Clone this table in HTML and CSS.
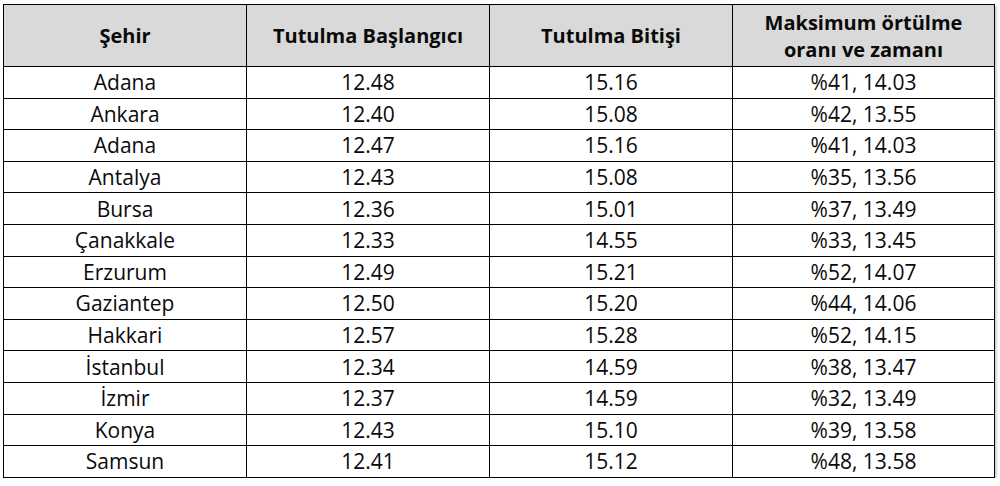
FILE: index.html
```html
<!DOCTYPE html>
<html lang="tr">
<head>
<meta charset="utf-8">
<link rel="stylesheet" href="styles.css">
</head>
<body>
<table class="eclipse">
  <colgroup>
    <col class="c1"><col class="c2"><col class="c3"><col class="c4">
  </colgroup>
  <thead>
    <tr class="head">
      <th>Şehir</th>
      <th>Tutulma Başlangıcı</th>
      <th>Tutulma Bitişi</th>
      <th>Maksimum örtülme<br>oranı ve zamanı</th>
    </tr>
  </thead>
  <tbody>
    <tr><td>Adana</td><td>12.48</td><td>15.16</td><td>%41, 14.03</td></tr>
    <tr><td>Ankara</td><td>12.40</td><td>15.08</td><td>%42, 13.55</td></tr>
    <tr><td>Adana</td><td>12.47</td><td>15.16</td><td>%41, 14.03</td></tr>
    <tr><td>Antalya</td><td>12.43</td><td>15.08</td><td>%35, 13.56</td></tr>
    <tr><td>Bursa</td><td>12.36</td><td>15.01</td><td>%37, 13.49</td></tr>
    <tr><td>Çanakkale</td><td>12.33</td><td>14.55</td><td>%33, 13.45</td></tr>
    <tr><td>Erzurum</td><td>12.49</td><td>15.21</td><td>%52, 14.07</td></tr>
    <tr><td>Gaziantep</td><td>12.50</td><td>15.20</td><td>%44, 14.06</td></tr>
    <tr><td>Hakkari</td><td>12.57</td><td>15.28</td><td>%52, 14.15</td></tr>
    <tr><td>İstanbul</td><td>12.34</td><td>14.59</td><td>%38, 13.47</td></tr>
    <tr><td>İzmir</td><td>12.37</td><td>14.59</td><td>%32, 13.49</td></tr>
    <tr><td>Konya</td><td>12.43</td><td>15.10</td><td>%39, 13.58</td></tr>
    <tr><td>Samsun</td><td>12.41</td><td>15.12</td><td>%48, 13.58</td></tr>
  </tbody>
</table>
</body>
</html>
```
FILE: styles.css
```css
html, body {
  margin: 0;
  padding: 0;
  background: #ffffff;
}
body {
  padding: 4px 0 0 3px;
  font-family: "Open Sans", "Liberation Sans", sans-serif;
  color: #0a0a0a;
}
.eclipse {
  border-collapse: collapse;
  table-layout: fixed;
  width: 991px;
  box-shadow: 2px 2px 2px rgba(0,0,0,0.18);
}
.c1, .c2, .c3 { width: 243px; }
.c4 { width: 262px; }
.eclipse th, .eclipse td {
  border: 1px solid #000;
  text-align: center;
  padding: 0;
}
.head {
  height: 62px;
  background: #d9d9d9;
}
.head th {
  font-weight: 700;
  font-size: 20px;
  line-height: 27px;
}
.eclipse td {
  font-size: 21px;
  font-weight: 500;
  height: 30.6px;
  line-height: 26px;
}
```
